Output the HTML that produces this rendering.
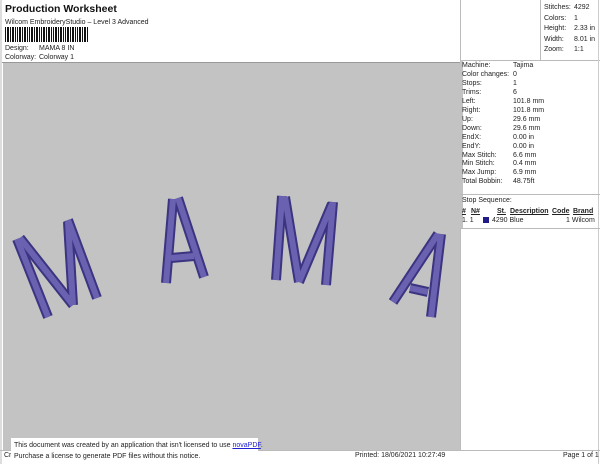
<!DOCTYPE html>
<html><head><style>
body{margin:0;width:600px;height:464px;background:#fff;font-family:"Liberation Sans",sans-serif;position:relative;overflow:hidden;font-size:7px;color:#222}
.a{position:absolute;white-space:nowrap}
.bl{position:absolute;background:#ccc}
</style></head><body>
<div class="a" style="left:5px;top:3px;font-size:10.5px;font-weight:bold;color:#111">Production Worksheet</div>
<div class="a" style="left:5px;top:19px">Wilcom EmbroideryStudio – Level 3 Advanced</div>
<svg class="a" style="left:5px;top:27px" width="84" height="16">
<g fill="#111">
<rect x="0" y="0" width="1" height="15"/><rect x="2" y="0" width="2" height="15"/><rect x="5" y="0" width="1" height="15"/><rect x="7" y="0" width="2" height="15"/><rect x="10" y="0" width="1" height="15"/><rect x="12" y="0" width="1" height="15"/><rect x="14" y="0" width="2" height="15"/><rect x="17" y="0" width="1" height="15"/><rect x="19" y="0" width="2" height="15"/><rect x="22" y="0" width="1" height="15"/><rect x="24" y="0" width="1" height="15"/><rect x="26" y="0" width="2" height="15"/><rect x="29" y="0" width="1" height="15"/><rect x="31" y="0" width="2" height="15"/><rect x="34" y="0" width="1" height="15"/><rect x="36" y="0" width="1" height="15"/><rect x="38" y="0" width="2" height="15"/><rect x="41" y="0" width="1" height="15"/><rect x="43" y="0" width="2" height="15"/><rect x="46" y="0" width="1" height="15"/><rect x="48" y="0" width="1" height="15"/><rect x="50" y="0" width="2" height="15"/><rect x="53" y="0" width="1" height="15"/><rect x="55" y="0" width="2" height="15"/><rect x="58" y="0" width="1" height="15"/><rect x="60" y="0" width="1" height="15"/><rect x="62" y="0" width="2" height="15"/><rect x="65" y="0" width="1" height="15"/><rect x="67" y="0" width="2" height="15"/><rect x="70" y="0" width="1" height="15"/><rect x="72" y="0" width="1" height="15"/><rect x="74" y="0" width="2" height="15"/><rect x="77" y="0" width="1" height="15"/><rect x="79" y="0" width="2" height="15"/><rect x="82" y="0" width="1" height="15"/>
</g></svg>
<div class="a" style="left:5px;top:45px">Design:</div><div class="a" style="left:39px;top:45px">MAMA 8 IN</div>
<div class="a" style="left:5px;top:54px">Colorway:</div><div class="a" style="left:39px;top:54px">Colorway 1</div>
<div class="bl" style="left:0;top:62px;width:460px;height:1px;background:#999"></div>
<div class="bl" style="left:3px;top:63px;width:457px;height:387px;background:#c3c3c3"></div>
<div class="bl" style="left:0;top:0;width:2px;height:464px;background:#ddd"></div>
<div class="bl" style="left:460px;top:0;width:1px;height:450px;background:#bbb"></div>
<div class="bl" style="left:540px;top:0;width:1px;height:60px;background:#bbb"></div>
<div class="bl" style="left:460px;top:60px;width:140px;height:1px;background:#bbb"></div>
<div class="bl" style="left:460px;top:60px;width:3px;height:168px;background:#c3c3c3"></div>
<div class="bl" style="left:598px;top:0;width:1px;height:464px;background:#ccc"></div>
<div class="bl" style="left:460px;top:194px;width:140px;height:1px;background:#bbb"></div>
<div class="bl" style="left:460px;top:228px;width:140px;height:1px;background:#bbb"></div>
<div class="a" style="left:544px;top:3px;line-height:10.5px">Stitches:<br>Colors:<br>Height:<br>Width:<br>Zoom:</div>
<div class="a" style="left:574px;top:3px;line-height:10.5px">4292<br>1<br>2.33 in<br>8.01 in<br>1:1</div>
<div class="a" style="left:462px;top:62px;line-height:8.95px">Machine:<br>Color changes:<br>Stops:<br>Trims:<br>Left:<br>Right:<br>Up:<br>Down:<br>EndX:<br>EndY:<br>Max Stitch:<br>Min Stitch:<br>Max Jump:<br>Total Bobbin:</div>
<div class="a" style="left:513px;top:62px;line-height:8.95px">Tajima<br>0<br>1<br>6<br>101.8 mm<br>101.8 mm<br>29.6 mm<br>29.6 mm<br>0.00 in<br>0.00 in<br>6.6 mm<br>0.4 mm<br>6.9 mm<br>48.75ft</div>
<div class="a" style="left:462px;top:197px">Stop Sequence:</div>
<div class="a" style="left:462px;top:208px;font-weight:bold;text-decoration:underline">#</div>
<div class="a" style="left:471px;top:208px;font-weight:bold;text-decoration:underline">N#</div>
<div class="a" style="left:497px;top:208px;font-weight:bold;text-decoration:underline">St.</div>
<div class="a" style="left:510px;top:208px;font-weight:bold;text-decoration:underline">Description</div>
<div class="a" style="left:552px;top:208px;font-weight:bold;text-decoration:underline">Code</div>
<div class="a" style="left:573px;top:208px;font-weight:bold;text-decoration:underline">Brand</div>
<div class="a" style="left:462px;top:217px">1. 1</div>
<div class="bl" style="left:483px;top:217px;width:6px;height:6px;background:#221c8a"></div>
<div class="a" style="left:492px;top:217px">4290 Blue</div>
<div class="a" style="left:566px;top:217px">1 Wilcom</div>
<svg class="a" style="left:0;top:0" width="460" height="450">
<defs>
<g id="L">
<line x1="17" y1="239" x2="48" y2="317"/><line x1="20" y1="238" x2="73" y2="305"/><line x1="73" y1="305" x2="68" y2="222"/><line x1="68" y1="220" x2="97" y2="298"/>
<line x1="173" y1="199" x2="166" y2="283"/><line x1="178" y1="198" x2="204" y2="277"/><line x1="171" y1="258" x2="194" y2="256"/>
<line x1="282" y1="196" x2="276" y2="280"/><line x1="285" y1="197" x2="299" y2="282"/><line x1="299" y1="282" x2="332" y2="204"/><line x1="333" y1="202" x2="326" y2="285"/>
<line x1="438" y1="234" x2="393" y2="302"/><line x1="441" y1="234" x2="431" y2="317"/><line x1="410" y1="288" x2="428" y2="292"/>
</g></defs>
<g stroke-linecap="butt" fill="none">
<use href="#L" stroke="#3b3480" stroke-width="10"/>
<use href="#L" stroke="#6a62b0" stroke-width="6"/>
</g></svg>
<div class="bl" style="left:0;top:450px;width:600px;height:1px;background:#bbb"></div>
<div class="a" style="left:4px;top:452px">Cr</div>
<div class="bl" style="left:11px;top:438px;width:247px;height:26px;background:#fff"></div>
<div class="a" style="left:14px;top:440px;line-height:11px;font-size:7px">This document was created by an application that isn't licensed to use <span style="color:#2020d0;text-decoration:underline">novaPDF</span>.<br>Purchase a license to generate PDF files without this notice.</div>
<div class="a" style="left:355px;top:452px">Printed: 18/06/2021 10:27:49</div>
<div class="a" style="left:563px;top:452px">Page 1 of 1</div>
</body></html>
